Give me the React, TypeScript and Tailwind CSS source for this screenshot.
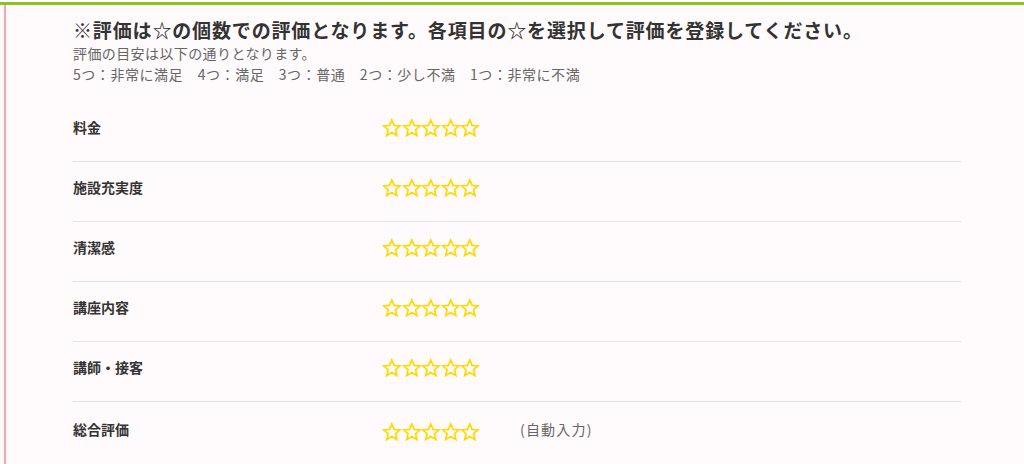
import React from "react";

const Star = () => (
  <svg width="20" height="20" viewBox="0 0 24 24" className="block">
    <path
      d="M12 2.2l2.9 6.6 7.1.6-5.4 4.7 1.6 7-6.2-3.7-6.2 3.7 1.6-7L2 9.4l7.1-.6z"
      fill="none"
      stroke="#ffd900"
      strokeWidth="2.1"
      strokeLinejoin="miter"
    />
  </svg>
);

const Stars = () => (
  <div className="flex">
    {[0, 1, 2, 3, 4].map((i) => (
      <span key={i} className="w-[19.6px] flex justify-center">
        <Star />
      </span>
    ))}
  </div>
);

const items = ["料金", "施設充実度", "清潔感", "講座内容", "講師・接客"];

export default function App() {
  return (
    <div
      className="w-[1024px] h-[464px] overflow-hidden bg-[#fffafb] relative"
      style={{ fontFamily: '"Noto Sans CJK JP", "Noto Sans", sans-serif' }}
    >
      <div className="h-[2px] bg-white" />
      <div className="h-[3px] bg-[#8dc21f]" />
      <div className="flex h-[459px]">
        <div className="w-[4px]" />
        <div className="w-[2px] bg-[#f4a6b4]" />
        <div className="flex-1 pl-[67px] pr-[63px]">
          <h1 className="text-[19px] leading-[26px] font-bold text-[#333] tracking-[0.85px] mt-[12px]">
            ※評価は☆の個数での評価となります。各項目の☆を選択して評価を登録してください。
          </h1>
          <p className="text-[14px] leading-[21px] text-[#666] tracking-[0.4px]">
            評価の目安は以下の通りとなります。
          </p>
          <p className="text-[14px] leading-[21px] text-[#666] tracking-[0.55px]">
            5つ：非常に満足　4つ：満足　3つ：普通　2つ：少し不満　1つ：非常に不満
          </p>
          <div className="mt-[17px]">
            {items.map((label) => (
              <div
                key={label}
                className="flex items-center h-[60px] border-b border-[#e3e1e2] pb-[8px]"
              >
                <div className="w-[309px] text-[14px] font-bold text-[#333]">
                  {label}
                </div>
                <Stars />
              </div>
            ))}
            <div className="flex items-center h-[60px] pb-[5px]">
              <div className="w-[309px] text-[14px] font-bold text-[#333]">
                総合評価
              </div>
              <div className="flex items-center pt-[4px]">
                <Stars />
                <span className="ml-[40px] text-[14px] text-[#666] tracking-[1.2px] -mt-[4px]">
                  (自動入力)
                </span>
              </div>
            </div>
          </div>
        </div>
      </div>
    </div>
  );
}
